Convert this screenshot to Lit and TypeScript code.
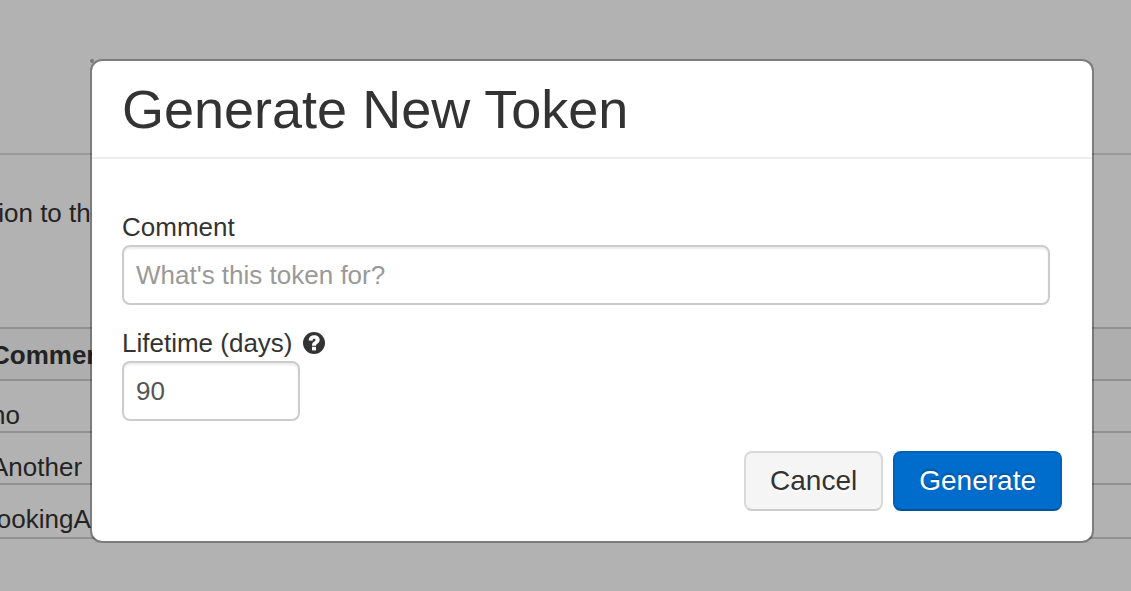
import { LitElement, html, css } from "lit";
import { customElement, state } from "lit/decorators.js";

@customElement("help-icon")
export class HelpIcon extends LitElement {
  static styles = css`
    :host {
      display: inline-flex;
    }
    .glyph {
      display: block;
      width: 22px;
      height: 22px;
    }
  `;

  render() {
    return html`
      <svg class="glyph" viewBox="0 0 22 22" role="img" aria-label="Help">
        <circle cx="11" cy="11" r="11" fill="#333" />
        <path
          d="M5.6 8.4C5.8 5 8 3.2 11.2 3.2C14.4 3.2 16.7 5 16.7 7.8C16.7 9.8 15.5 10.9 14.4 11.7C13.3 12.4 13 12.8 13 13.8H9C9 11.6 9.8 10.5 11.1 9.6C12 9 12.4 8.7 12.4 7.9C12.4 7.2 11.9 6.8 11.2 6.8C10.2 6.8 9.7 7.4 9.6 8.8Z"
          fill="#fff"
        />
        <rect x="9" y="14.8" width="4" height="3.6" fill="#fff" />
      </svg>
    `;
  }
}

@customElement("app-root")
export class AppRoot extends LitElement {
  @state() private comments = ["no", "Another", "lookingA"];

  static styles = css`
    :host {
      display: block;
      position: relative;
      min-height: 100vh;
      overflow: hidden;
      background: #fff;
      color: #333;
      font-family: "Liberation Sans", Arial, sans-serif;
      font-size: 26px;
      line-height: 36px;
    }
    *,
    *::before {
      box-sizing: border-box;
    }
    .page {
      margin-left: -9px;
      padding-top: 153px;
    }
    .intro {
      margin: 0;
      padding: 40px 0 96px;
      border-top: 2px solid #ddd;
    }
    .tokens {
      width: 100%;
      border-collapse: separate;
      border-spacing: 0;
      border-bottom: 2px solid #d2d2d2;
    }
    .tokens th,
    .tokens td {
      height: 52px;
      padding: 18px 0 0;
      border-top: 2px solid #d2d2d2;
      line-height: 32px;
      text-align: left;
      vertical-align: top;
    }
    .tokens th {
      padding: 10px 0 8px;
      background: #fafafa;
    }
    .tokens tr:last-child td {
      padding-bottom: 2px;
    }
    .backdrop {
      position: absolute;
      inset: 0;
      padding: 59px 37px 48px 90px;
      background: rgba(0, 0, 0, 0.3);
    }
    .modal {
      position: relative;
      border: 2px solid rgba(0, 0, 0, 0.3);
      border-radius: 12px;
      background: #fff;
      background-clip: padding-box;
    }
    .modal::before {
      content: "";
      position: absolute;
      top: -2px;
      left: -2px;
      width: 4px;
      height: 4px;
      border-radius: 50%;
      background: #777;
    }
    .head {
      padding: 18px 30px;
      border-bottom: 2px solid #eee;
    }
    .title {
      margin: 0;
      font-size: 54px;
      font-weight: 400;
      line-height: 60px;
    }
    .body {
      display: grid;
      gap: 20px;
      padding: 50px 42px 30px 30px;
    }
    .field {
      display: grid;
      justify-items: start;
    }
    .caption {
      display: flex;
      align-items: center;
      gap: 10px;
    }
    .input {
      width: 100%;
      height: 60px;
      margin: 0;
      padding: 8px 12px;
      border: 2px solid #ccc;
      border-radius: 8px;
      outline: none;
      background: #fff;
      box-shadow: inset 0 2px 2px rgba(0, 0, 0, 0.075);
      color: #555;
      font: inherit;
    }
    .input::placeholder {
      color: #999;
      opacity: 1;
    }
    .short {
      width: 178px;
    }
    .actions {
      display: flex;
      justify-content: flex-end;
      gap: 10px;
      padding: 0 30px 30px;
    }
    .button {
      height: 60px;
      padding: 0 24px;
      border: 2px solid;
      border-radius: 8px;
      font: inherit;
      font-size: 28px;
    }
    .plain {
      border-color: #d9d9d9 #d9d9d9 #ccc;
      background: #f5f5f5;
      color: #333;
      text-shadow: 0 2px 2px rgba(255, 255, 255, 0.75);
    }
    .primary {
      border-color: #0062b7 #0062b7 #005299;
      background: #006dcc;
      color: #fff;
      text-shadow: 0 -2px 2px rgba(0, 0, 0, 0.25);
    }
  `;

  render() {
    return html`
      <main class="page">
        <p class="intro">tion to the</p>
        <table class="tokens">
          <thead>
            <tr>
              <th scope="col">Comment</th>
            </tr>
          </thead>
          <tbody>
            ${this.comments.map((c) => html`<tr><td>${c}</td></tr>`)}
          </tbody>
        </table>
      </main>
      <div class="backdrop">
        <form
          class="modal"
          role="dialog"
          aria-labelledby="title"
          @submit=${(e: Event) => e.preventDefault()}
        >
          <header class="head">
            <h1 class="title" id="title">Generate New Token</h1>
          </header>
          <div class="body">
            <div class="field">
              <label class="caption" for="comment">Comment</label>
              <input class="input" id="comment" type="text" placeholder="What's this token for?" />
            </div>
            <div class="field">
              <label class="caption" for="lifetime">Lifetime (days)<help-icon></help-icon></label>
              <input class="input short" id="lifetime" type="text" inputmode="numeric" value="90" />
            </div>
          </div>
          <footer class="actions">
            <button class="button plain" type="button">Cancel</button>
            <button class="button primary" type="submit">Generate</button>
          </footer>
        </form>
      </div>
    `;
  }
}
